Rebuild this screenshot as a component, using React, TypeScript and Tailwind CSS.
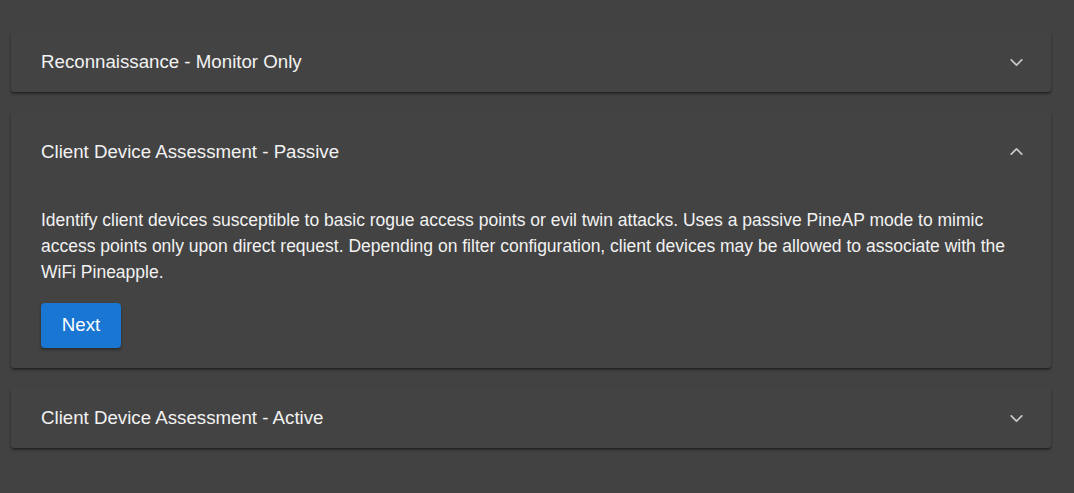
import { ChevronDown, ChevronUp } from 'lucide-react';

interface PanelProps {
  title: string;
  open?: boolean;
  children?: React.ReactNode;
}

function Panel({ title, open, children }: PanelProps) {
  return (
    <div className="bg-[#434343] rounded-[3px] shadow-[0_2px_3px_rgba(0,0,0,0.35),0_1px_1px_rgba(0,0,0,0.2)]">
      <div className={`flex items-center justify-between pl-[30px] pr-[24px] ${open ? 'h-[79px]' : 'h-[60px]'}`}>
        <span className="text-[18.7px] leading-[24px] text-[#f2f2f2]">{title}</span>
        {open ? (
          <ChevronUp className="w-[21px] h-[21px] text-[#c8c8c8]" strokeWidth={2} />
        ) : (
          <ChevronDown className="w-[21px] h-[21px] text-[#c8c8c8]" strokeWidth={2} />
        )}
      </div>
      {open && <div className="pl-[30px] pr-[24px] pb-[20px]">{children}</div>}
    </div>
  );
}

export default function App() {
  return (
    <div
      className="min-h-[493px] bg-[#424242] pt-[32px] pl-[11px] pr-[23px] flex flex-col gap-[20px]"
      style={{ fontFamily: '"Liberation Sans", Arial, sans-serif' }}
    >
      <Panel title="Reconnaissance - Monitor Only" />
      <Panel title="Client Device Assessment - Passive" open>
        <p className="text-[17.5px] leading-[26px] text-[#f2f2f2] pt-[16px]">
          Identify client devices susceptible to basic rogue access points or evil twin attacks. Uses a passive PineAP mode to mimic access points only upon direct request. Depending on filter configuration, client devices may be allowed to associate with the WiFi Pineapple.
        </p>
        <button className="mt-[18px] w-[80px] h-[45px] rounded-[4px] bg-[#1976d2] text-white text-[18.7px] shadow-[0_2px_3px_rgba(0,0,0,0.35)]">
          Next
        </button>
      </Panel>
      <Panel title="Client Device Assessment - Active" />
    </div>
  );
}
